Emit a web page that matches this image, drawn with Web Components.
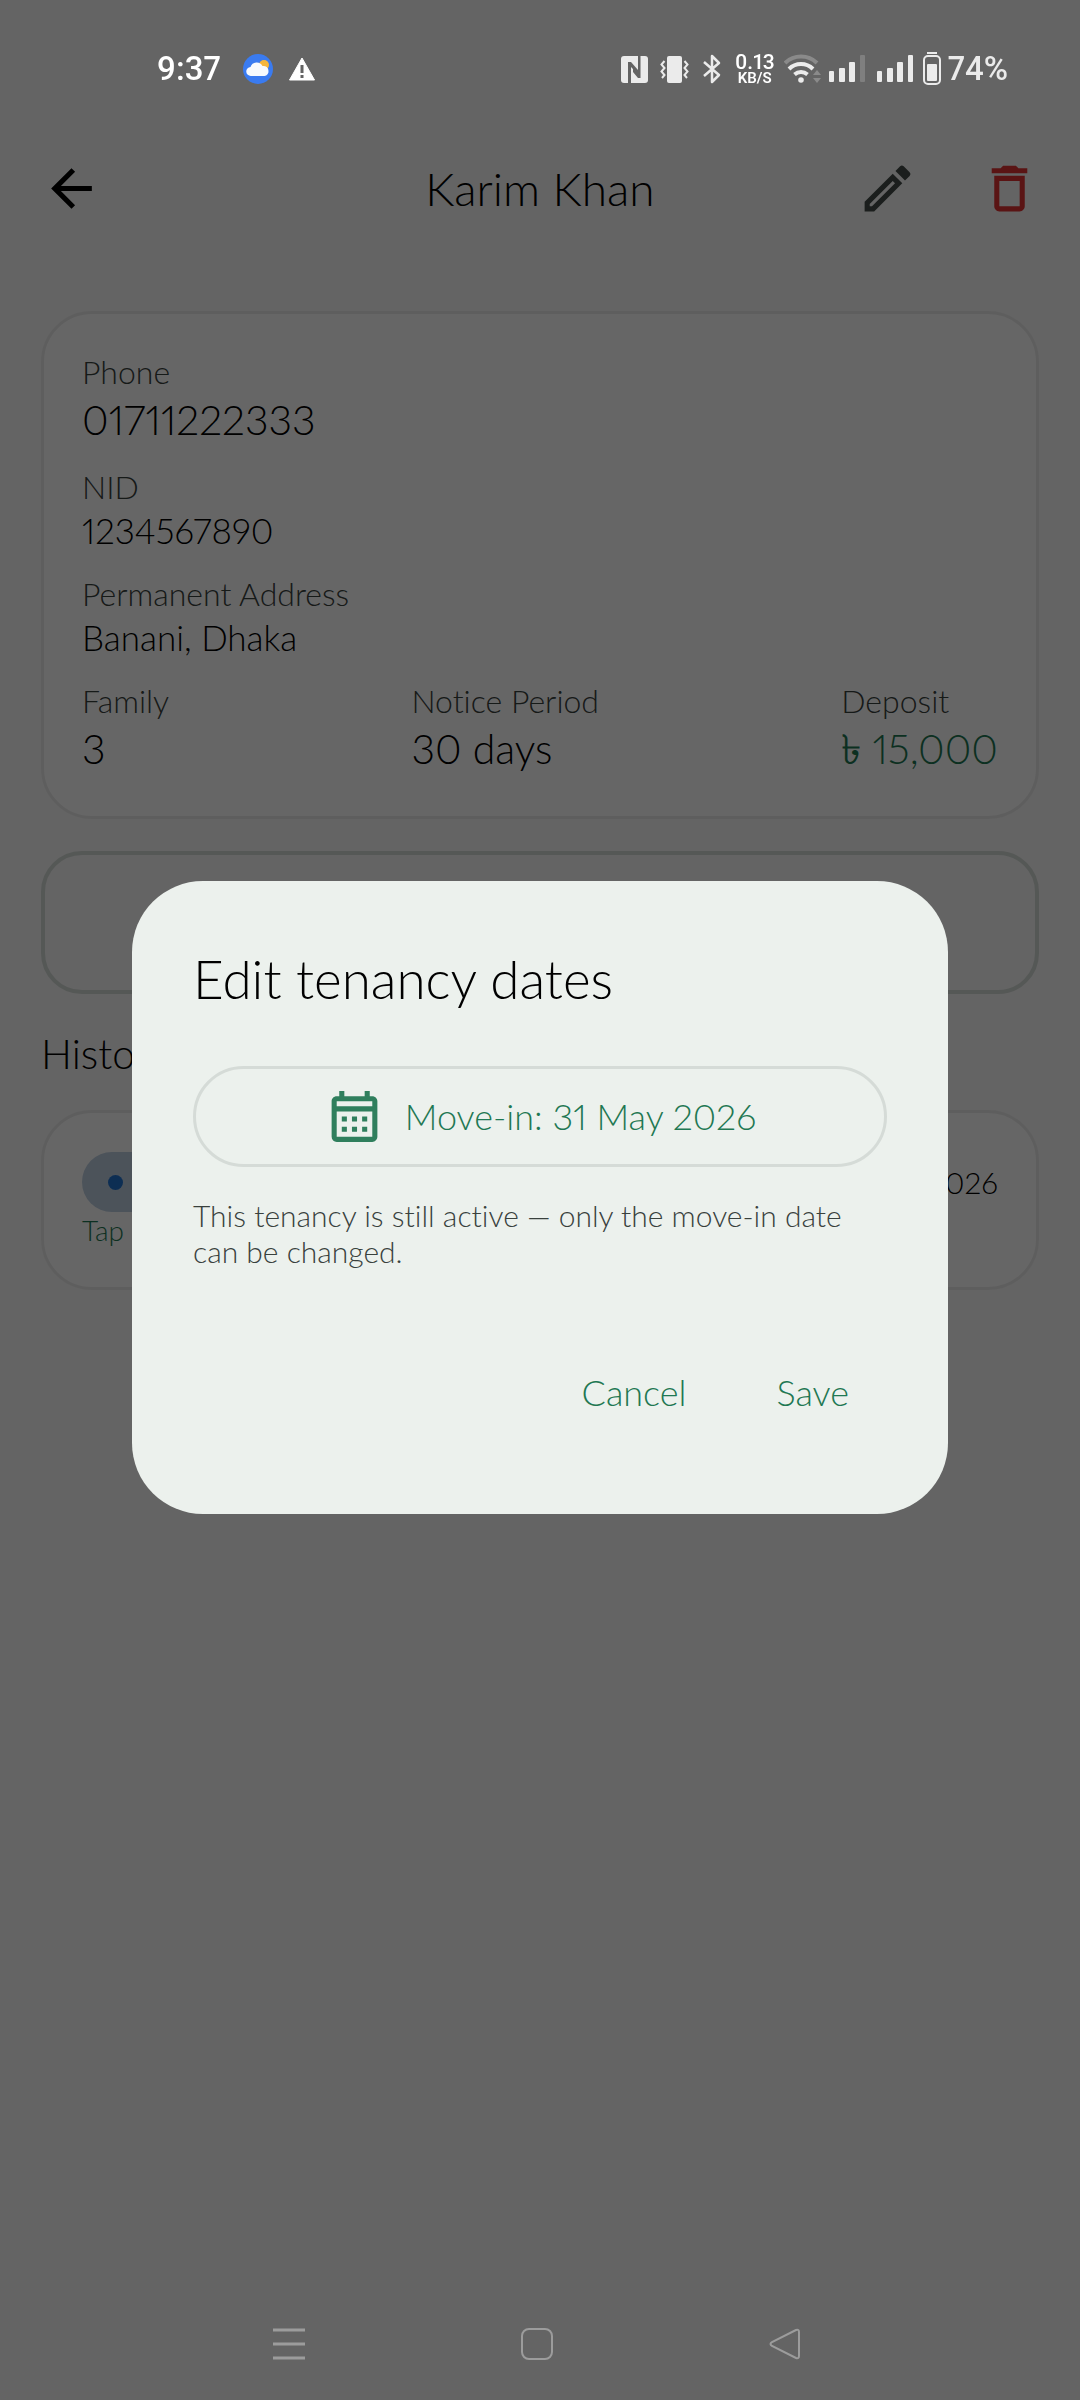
<!DOCTYPE html>
<html lang="en">
<head>
<meta charset="utf-8">
<meta name="viewport" content="width=device-width, initial-scale=1">
<title>Karim Khan</title>
<style>
    html, body {
        margin: 0;
        min-height: 100vh;
        background: #f9f9f9;
    }

    body {
        font-family: Lato, "Noto Sans", sans-serif;
        font-weight: 300;
        font-variant-ligatures: none;
        font-variant-numeric: proportional-nums;
        color: #000;
        --green: #1f7853;
        --muted: #39413d;
        --outline: #d5dbd7;
    }
</style>
</head>
<body>
<tenant-page></tenant-page>

<script>
const sheet = `
    * { box-sizing: border-box; }
    svg { display: block; flex: none; }
    button {
        font: inherit;
        font-variant-ligatures: inherit;
        font-variant-numeric: inherit;
        color: inherit;
        background: none;
        border: 0;
        padding: 0;
        margin: 0;
        cursor: pointer;
    }
`;

// Material icons on a 24 grid
const icons = {
    back: '<path d="M20 11H7.83l5.59-5.59L12 4l-8 8 8 8 1.41-1.41L7.83 13H20z"/>',
    edit: '<path fill-rule="evenodd" d="M3 17.46V21h3.75L17.81 9.94l-3.75-3.75L3 17.25zM5.9 19H5v-.9l9.06-9.06.9.92zM20.71 7.04a1 1 0 0 0 0-1.41l-2.34-2.34a1 1 0 0 0-1.41 0l-1.83 1.83 3.75 3.75z"/>',
    trash: '<path fill-rule="evenodd" d="M6 19c0 1.1.9 2 2 2h8c1.100 0 2-.9 2-2V7H6zM8 9h8v10H8zM15.500 4l-1-1h-5l-1 1H5v2h14V4z"/>',
    calendar: '<path fill-rule="evenodd" d="M19 4h-1V2h-2v2H8V2H6v2H5c-1.110 0-2 .9-2 2v14a2 2 0 0 0 2 2h14c1.100 0 2-.9 2-2V6c0-1.100-.9-2-2-2zm0 16H5V10h14zm0-12H5V6h14zM7 12h2v2H7zM11 12h2v2h-2zM15 12h2v2h-2zM7 16h2v2H7zM11 16h2v2h-2zM15 16h2v2h-2z"/>'
};

class AppIcon extends HTMLElement {
    constructor() {
        super();
        this.attachShadow({ mode: 'open' });
    }

    connectedCallback() {
        this.shadowRoot.innerHTML = `
            <style>
                :host { display: block; flex: none; width: 61px; height: 61px; }
                svg { display: block; width: 100%; height: 100%; }
            </style>
            <svg viewBox="0 0 24 24" fill="currentColor" aria-hidden="true">${icons[this.getAttribute('name')]}</svg>
        `;
    }
}

class StatusBar extends HTMLElement {
    constructor() {
        super();
        this.attachShadow({ mode: 'open' });
    }

    connectedCallback() {
        this.shadowRoot.innerHTML = `
            <style>
                ${sheet}
                :host {
                    display: flex;
                    justify-content: space-between;
                    align-items: center;
                    height: 107px;
                    padding: 31px 72px 0 157px;
                    position: relative;
                    z-index: 2;
                    color: #ebebeb;
                    font-family: Roboto, sans-serif;
                    font-size: 33px;
                    font-weight: 500;
                    line-height: 38px;
                }
                .group { display: flex; align-items: center; }
                .time { color: #fff; margin-right: 22px; }
                .weather { margin-right: 16px; }
                .speed {
                    color: #fff;
                    font-weight: 600;
                    font-size: 15px;
                    line-height: 14px;
                    text-align: center;
                    margin: 0 9px 0 13px;
                }
                .speed b { display: block; font-size: 21px; line-height: 18px; font-weight: 500; }
                .vibrate { margin: 0 13px 0 12px; }
                .bars { margin: 0 12px 0 8px; }
                .battery { margin: 0 7px 0 10px; }
            </style>
            <div class="group">
                <span class="time">9:37</span>
                <svg class="weather" width="30" height="30" viewBox="0 0 30 30">
                    <circle cx="15" cy="15" r="15" fill="#3a7bf0"/>
                    <circle cx="21" cy="11" r="5" fill="#f5b63c"/>
                    <path d="M8 22a4.500 4.500 0 0 1-.5-9 6.500 6.500 0 0 1 12-1 5 5 0 0 1 6 5 4.500 4.500 0 0 1-4 5z" fill="#f7fafd"/>
                </svg>
                <svg width="26" height="24" viewBox="0 0 26 24">
                    <path d="M13 1 25.500 23H.5z" fill="#fff" stroke="#fff" stroke-linejoin="round"/>
                    <path d="M11.500 8h3v8h-3zM11.500 18h3v3h-3z" fill="#636363"/>
                </svg>
            </div>
            <div class="group">
                <svg width="27" height="27" viewBox="0 0 27 27">
                    <rect width="27" height="27" rx="3" fill="currentColor"/>
                    <path d="M7 27V6h3l7 8v4l-7-7v16zM17 0h2.500v22H17l-5-6v-4l5 5z" fill="#636363"/>
                </svg>
                <svg class="vibrate" width="29" height="27" viewBox="0 0 29 27">
                    <rect x="7" width="15" height="27" rx="2" fill="currentColor"/>
                    <path d="M4.500 5 1.500 8.500 4.500 12 1.500 15.500 4.500 19 2 22M24.500 5l3 3.500-3 3.500 3 3.500-3 3.500L27 22" fill="none" stroke="currentColor" stroke-width="2"/>
                </svg>
                <svg width="20" height="30" viewBox="0 0 20 30">
                    <path d="M2 8l15 13-7 7V2l7 7L2 22" fill="none" stroke="currentColor" stroke-width="2.500" stroke-linejoin="round"/>
                </svg>
                <div class="speed"><b>0.13</b>KB/S</div>
                <svg width="37" height="30" viewBox="0 0 37 30" fill="none" stroke-width="4">
                    <path d="M1 9a23 23 0 0 1 32 0" stroke="#8a8a8a"/>
                    <path d="M5 15a17 17 0 0 1 24 0M10.500 20.500a10 10 0 0 1 13 0" stroke="currentColor"/>
                    <circle cx="17" cy="26" r="2.800" fill="currentColor"/>
                    <path d="M29 21l4-5 4 5zM29 24l4 5 4-5z" fill="#8a8a8a"/>
                </svg>
                <svg class="bars" width="36" height="28" viewBox="0 0 36 28" fill="currentColor">
                    <rect y="16" width="5" height="11" rx="1"/>
                    <rect x="10" y="13" width="6" height="14" rx="1"/>
                    <rect x="20" y="7" width="6" height="20" rx="1"/>
                    <rect x="31" width="5" height="27" rx="1" fill="#7f7f7f"/>
                </svg>
                <svg width="36" height="28" viewBox="0 0 36 28" fill="currentColor">
                    <rect y="16" width="5" height="11" rx="1"/>
                    <rect x="10" y="13" width="6" height="14" rx="1"/>
                    <rect x="20" y="7" width="6" height="20" rx="1"/>
                    <rect x="31" width="5" height="27" rx="1"/>
                </svg>
                <svg class="battery" width="18" height="34" viewBox="0 0 18 34">
                    <rect x="4" width="10" height="2" fill="currentColor"/>
                    <rect x="1" y="4" width="16" height="28" rx="4" fill="none" stroke="currentColor" stroke-width="2"/>
                    <rect x="4" y="12" width="10" height="17" rx="1" fill="currentColor"/>
                </svg>
                <span>74%</span>
            </div>
        `;
    }
}

class TopBar extends HTMLElement {
    constructor() {
        super();
        this.attachShadow({ mode: 'open' });
    }

    connectedCallback() {
        this.shadowRoot.innerHTML = `
            <style>
                ${sheet}
                :host {
                    display: grid;
                    grid-template-columns: 1fr auto 1fr;
                    align-items: center;
                    height: 163px;
                    padding: 0 10px;
                }
                h1 { margin: 0; font-size: 46px; line-height: 56px; font-weight: 300; }
                button { width: 122px; height: 122px; display: grid; place-items: center; }
                .actions { display: flex; justify-content: flex-end; }
                .edit { color: #454d49; }
                .delete { color: #e03434; }
            </style>
            <button aria-label="Back"><app-icon name="back"></app-icon></button>
            <h1><slot></slot></h1>
            <div class="actions">
                <button class="edit" aria-label="Edit"><app-icon name="edit"></app-icon></button>
                <button class="delete" aria-label="Delete"><app-icon name="trash"></app-icon></button>
            </div>
        `;
    }
}

class InfoCard extends HTMLElement {
    constructor() {
        super();
        this.attachShadow({ mode: 'open' });
    }

    connectedCallback() {
        this.shadowRoot.innerHTML = `
            <style>
                :host {
                    display: flex;
                    flex-direction: column;
                    gap: 20px;
                    box-sizing: border-box;
                    padding: 39px 38px;
                    border: 3px solid #ececec;
                    border-radius: 51px;
                    background: #fff;
                }
            </style>
            <slot></slot>
        `;
    }
}

class InfoField extends HTMLElement {
    constructor() {
        super();
        this.attachShadow({ mode: 'open' });
    }

    connectedCallback() {
        this.shadowRoot.innerHTML = `
            <style>
                :host { display: block; }
                .label { font-size: 32px; line-height: 38px; color: var(--muted); }
                .value { font-size: 35px; line-height: 49px; }
                :host([large]) .value { font-size: 41px; line-height: 57px; }
                :host([money]) .value { color: var(--green); }
            </style>
            <div class="label">${this.getAttribute('label')}</div>
            <div class="value"><slot></slot></div>
        `;
    }
}

class TenancyRow extends HTMLElement {
    constructor() {
        super();
        this.attachShadow({ mode: 'open' });
    }

    connectedCallback() {
        this.shadowRoot.innerHTML = `
            <style>
                :host { display: block; }
                .row { display: flex; align-items: center; justify-content: space-between; }
                .chip {
                    display: flex;
                    align-items: center;
                    gap: 15px;
                    height: 60px;
                    padding: 0 26px;
                    border-radius: 30px;
                    background: #bdcfe2;
                    color: #2273d0;
                    font-size: 28px;
                }
                .dot { width: 15px; height: 15px; border-radius: 50%; background: currentColor; }
                .date { font-size: 30px; line-height: 38px; }
                .hint { font-size: 28px; line-height: 36px; color: var(--green); }
            </style>
            <div class="row">
                <span class="chip"><span class="dot"></span>Active</span>
                <span class="date"><slot></slot></span>
            </div>
            <div class="hint">Tap</div>
        `;
    }
}

class TenancyDialog extends HTMLElement {
    constructor() {
        super();
        this.attachShadow({ mode: 'open' });
    }

    connectedCallback() {
        this.shadowRoot.innerHTML = `
            <style>
                ${sheet}
                :host {
                    position: fixed;
                    inset: 0;
                    z-index: 1;
                    display: flex;
                    align-items: center;
                    padding: 0 132px 6px;
                    box-sizing: border-box;
                    background: rgba(0, 0, 0, 0.6);
                }
                .panel {
                    flex: 1;
                    padding: 61px;
                    border-radius: 71px;
                    background: #ecf1ed;
                }
                h2 { margin: 0 0 50px; font-size: 53px; line-height: 74px; font-weight: 300; }
                .date {
                    display: flex;
                    align-items: center;
                    justify-content: center;
                    gap: 20px;
                    width: 100%;
                    height: 101px;
                    border: 3px solid var(--outline);
                    border-radius: 51px;
                    color: var(--green);
                    font-size: 36px;
                }
                .date app-icon { color: #2f7f5d; }
                p { margin: 30px 0 62px; font-size: 30px; line-height: 36px; color: var(--muted); }
                .actions { display: flex; justify-content: flex-end; gap: 14px; }
                .actions button { height: 122px; padding: 0 38px; font-size: 36px; color: var(--green); }
            </style>
            <div class="panel" role="dialog" aria-labelledby="title">
                <h2 id="title">Edit tenancy dates</h2>
                <button class="date"><app-icon name="calendar"></app-icon>Move-in: 31 May 2026</button>
                <p>This tenancy is still active — only the move-in date can be changed.</p>
                <div class="actions">
                    <button>Cancel</button>
                    <button>Save</button>
                </div>
            </div>
        `;
    }
}

class NavBar extends HTMLElement {
    constructor() {
        super();
        this.attachShadow({ mode: 'open' });
    }

    connectedCallback() {
        this.shadowRoot.innerHTML = `
            <style>
                ${sheet}
                :host {
                    display: flex;
                    justify-content: center;
                    gap: 126px;
                    height: 112px;
                    padding-right: 6px;
                    position: relative;
                    z-index: 2;
                    color: #9c9c9c;
                }
                button { width: 122px; display: grid; place-items: center; }
            </style>
            <button aria-label="Recent apps">
                <svg width="32" height="32" viewBox="0 0 32 32" stroke="currentColor" stroke-width="3"><path d="M0 2h32M0 16h32M0 30h32"/></svg>
            </button>
            <button aria-label="Home">
                <svg width="32" height="32" viewBox="0 0 32 32" fill="none" stroke="currentColor" stroke-width="2"><rect x="1" y="1" width="30" height="30" rx="7"/></svg>
            </button>
            <button aria-label="Back">
                <svg width="32" height="32" viewBox="0 0 32 32" fill="none" stroke="currentColor" stroke-width="2"><path d="M27 2 3 14q-3 2 0 4l24 12q3 1 3-2V4q0-3-3-2z"/></svg>
            </button>
        `;
    }
}

class TenantPage extends HTMLElement {
    constructor() {
        super();
        this.attachShadow({ mode: 'open' });
    }

    connectedCallback() {
        this.shadowRoot.innerHTML = `
            <style>
                ${sheet}
                :host { display: flex; flex-direction: column; min-height: 100vh; }
                main { flex: 1; padding: 41px; }
                .fields { display: flex; justify-content: space-between; }
                .wide {
                    display: block;
                    width: 100%;
                    height: 143px;
                    margin: 32px 0;
                    border: 4px solid var(--outline);
                    border-radius: 41px;
                }
                h2 { margin: 0 0 28px; font-size: 41px; line-height: 56px; font-weight: 300; }
            </style>
            <status-bar></status-bar>
            <top-bar>Karim Khan</top-bar>
            <main>
                <info-card>
                    <info-field large label="Phone">01711222333</info-field>
                    <info-field label="NID">1234567890</info-field>
                    <info-field label="Permanent Address">Banani, Dhaka</info-field>
                    <div class="fields">
                        <info-field large label="Family">3</info-field>
                        <info-field large label="Notice Period">30 days</info-field>
                        <info-field large money label="Deposit">৳ 15,000</info-field>
                    </div>
                </info-card>
                <button class="wide" aria-label="Tenancy agreement"></button>
                <h2>History</h2>
                <info-card>
                    <tenancy-row>31 May 2026</tenancy-row>
                </info-card>
            </main>
            <nav-bar></nav-bar>
            <tenancy-dialog></tenancy-dialog>
        `;
    }
}

customElements.define('app-icon', AppIcon);
customElements.define('status-bar', StatusBar);
customElements.define('top-bar', TopBar);
customElements.define('info-card', InfoCard);
customElements.define('info-field', InfoField);
customElements.define('tenancy-row', TenancyRow);
customElements.define('tenancy-dialog', TenancyDialog);
customElements.define('nav-bar', NavBar);
customElements.define('tenant-page', TenantPage);
</script>
</body>
</html>
